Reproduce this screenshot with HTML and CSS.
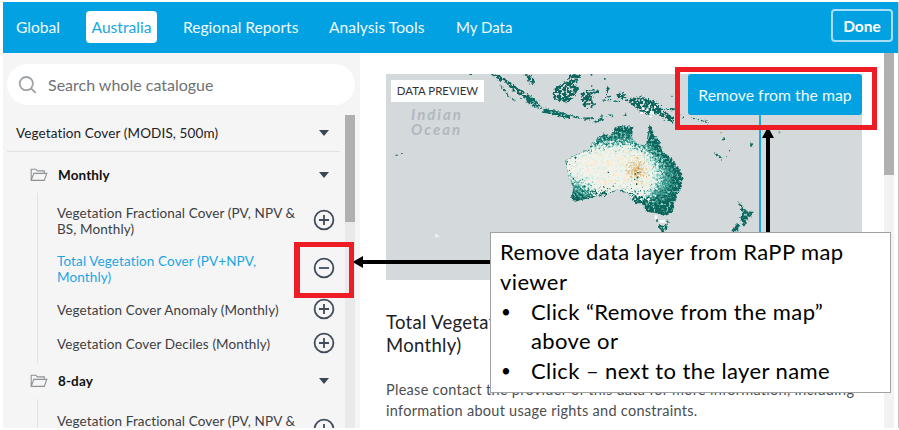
FILE: index.html
```
<!DOCTYPE html>
<html lang="en">
<head>
<meta charset="utf-8">
<title>RaPP Map catalogue</title>
<link rel="stylesheet" href="styles.css">
</head>
<body>
<svg class="defs" width="0" height="0">
  <symbol id="plus" viewBox="0 0 22 22"><circle cx="11" cy="11" r="9.4"/><path d="M11 6v10M6 11h10"/></symbol>
  <symbol id="minus" viewBox="0 0 22 22"><circle cx="11" cy="11" r="9.4"/><path d="M6 11h10"/></symbol>
  <symbol id="folder" viewBox="0 0 18 14"><path d="M1.2 12.2V1.2h4.6l1.5 1.7h7v2M1.2 12.4l2.6-7h13l-2.5 7z"/></symbol>
</svg>
<div class="app">
  <header class="nav">
    <nav class="tabs">
      <a class="tab global">Global</a>
      <a class="tab active">Australia</a>
      <a class="tab reports">Regional Reports</a>
      <a class="tab tools">Analysis Tools</a>
      <a class="tab data">My Data</a>
    </nav>
    <button class="done">Done</button>
  </header>
  <div class="body">
    <aside class="side">
      <div class="search">
        <svg width="20" height="20" viewBox="0 0 20 20"><circle cx="8.3" cy="8.6" r="6.6"/><path d="M13.6 14l3.6 3.4"/></svg>
        <span>Search whole catalogue</span>
      </div>
      <div class="catalogue">
        <div class="tree">
          <div class="root"><span>Vegetation Cover (MODIS, 500m)</span><i class="caret"></i></div>
          <div class="folder"><svg width="18" height="14"><use href="#folder"/></svg><b>Monthly</b><i class="caret"></i></div>
          <div class="group">
            <div class="item two"><span>Vegetation Fractional Cover (PV, NPV &amp;<br>BS, Monthly)</span><svg class="op"><use href="#plus"/></svg></div>
            <div class="item two on"><span>Total Vegetation Cover (PV+NPV,<br>Monthly)</span><svg class="op"><use href="#minus"/></svg></div>
            <div class="item"><span>Vegetation Cover Anomaly (Monthly)</span><svg class="op"><use href="#plus"/></svg></div>
            <div class="item"><span>Vegetation Cover Deciles (Monthly)</span><svg class="op"><use href="#plus"/></svg></div>
          </div>
          <div class="folder second"><svg width="18" height="14"><use href="#folder"/></svg><b>8-day</b><i class="caret"></i></div>
          <div class="group">
            <div class="item two last"><span>Vegetation Fractional Cover (PV, NPV &amp;</span><svg class="op"><use href="#plus"/></svg></div>
          </div>
        </div>
        <div class="track"><div class="thumb"></div></div>
      </div>
    </aside>
    <main class="main">
      <section class="detail">
        <div class="preview">
          <svg class="map" width="476" height="206" viewBox="386 74 476 206">
            <defs>
              <filter id="rough" x="-5%" y="-5%" width="110%" height="110%">
                <feTurbulence type="fractalNoise" baseFrequency=".13" numOctaves="2" seed="4" result="n"/>
                <feDisplacementMap in="SourceGraphic" in2="n" scale="14" xChannelSelector="R" yChannelSelector="G" result="d"/>
                <feColorMatrix in="n" values="0 0 0 0 .25  0 0 0 0 .62  0 0 0 0 .57  0 6 0 0 -3.5" result="l"/>
                <feComposite in="l" in2="d" operator="in" result="s"/>
                <feMerge><feMergeNode in="d"/><feMergeNode in="s"/></feMerge>
              </filter>
              <filter id="holes" x="-5%" y="-10%" width="110%" height="120%">
                <feTurbulence type="fractalNoise" baseFrequency=".13" numOctaves="2" seed="9" result="n"/>
                <feDisplacementMap in="SourceGraphic" in2="n" scale="20" xChannelSelector="R" yChannelSelector="G" result="d"/>
                <feColorMatrix in="n" values="0 0 0 0 0  0 0 0 0 0  0 0 0 0 0  0 0 -12 0 7.4" result="h"/>
                <feComposite in="d" in2="h" operator="in"/>
              </filter>
              <filter id="grain" x="-30%" y="-30%" width="160%" height="160%">
                <feGaussianBlur stdDeviation="5" result="b"/>
                <feTurbulence type="fractalNoise" baseFrequency=".15" numOctaves="2" seed="2" result="n"/>
                <feDisplacementMap in="b" in2="n" scale="95" xChannelSelector="R" yChannelSelector="G"/>
              </filter>
              <filter id="specks" x="0" y="0" width="100%" height="100%">
                <feTurbulence type="fractalNoise" baseFrequency=".1" numOctaves="2" seed="12" result="n"/>
                <feColorMatrix in="n" values="0 0 0 0 .95  0 0 0 0 .82  0 0 0 0 .6  8 0 0 0 -4.6" result="t"/>
                <feGaussianBlur in="SourceGraphic" stdDeviation="6" result="m"/>
                <feComposite in="t" in2="m" operator="in"/>
              </filter>
              <filter id="mint" x="0" y="0" width="100%" height="100%">
                <feTurbulence type="fractalNoise" baseFrequency=".13" numOctaves="2" seed="31" result="n"/>
                <feColorMatrix in="n" values="0 0 0 0 .62  0 0 0 0 .86  0 0 0 0 .82  0 7 0 0 -3.9" result="t"/>
                <feComposite in="t" in2="SourceGraphic" operator="in"/>
              </filter>
              <clipPath id="land"><path d="M106 273L125 262L150 250L180 238L188 216L222 190L240 200L255 172L280 166L310 172L305 203L322 222L348 227L353 195L359 160L372 193L388 213L397 243L420 260L440 285L450 300L458 320L455 350L440 380L428 425L400 437L380 430L350 425L335 400L318 400L305 390L293 367L260 358L225 375L200 378L175 385L135 395L121 385L130 360L117 320Z"/></clipPath>
            </defs>
            <rect x="386" y="74" width="476" height="206" fill="#d4d9dc"/>
            <g class="ocean"><text x="411" y="119.500">Indian</text><text x="411" y="135">Ocean</text></g>
            <g transform="translate(530 70) scale(.3333)">
              <g filter="url(#rough)">
                <path fill="#0f665c" d="M106 273L125 262L150 250L180 238L188 216L222 190L240 200L255 172L280 166L310 172L305 203L322 222L348 227L353 195L359 160L372 193L388 213L397 243L420 260L440 285L450 300L458 320L455 350L440 380L428 425L400 437L380 430L350 425L335 400L318 400L305 390L293 367L260 358L225 375L200 378L175 385L135 395L121 385L130 360L117 320Z"/>
                <path fill="#0f665c" d="M386 462L400 468L413 460L411 480L400 487L388 476Z"/>
              </g>
              <g clip-path="url(#land)">
                <path filter="url(#grain)" fill="#4aa99d" opacity=".7" d="M105 255L220 205L300 195L370 232L420 290L430 340L400 380L370 395L340 385L290 365L240 365L160 380L120 360Z"/>
                <path filter="url(#grain)" fill="#a5ddd5" opacity=".85" d="M98 262L200 218L300 215L360 240L400 300L395 345L350 390L310 370L250 365L180 360L110 335Z"/>
                <path filter="url(#grain)" fill="#f3f2ea" d="M100 268L185 232L300 226L345 245L378 295L375 345L345 385L310 370L250 365L200 375L170 340L105 318Z"/>
                <path filter="url(#mint)" d="M112 268L200 225L300 225L360 245L400 300L395 340L350 380L310 365L250 360L180 360L130 330Z"/>
                <path filter="url(#specks)" d="M140 270L210 240L300 240L350 270L370 320L345 365L300 345L210 362L190 320Z"/>
                <ellipse filter="url(#grain)" cx="320" cy="298" rx="20" ry="26" fill="#dcb772" opacity=".8"/>
                <path fill="#0c5a50" d="M314 310l4 0 0 4-4 0zM320 320l5 0 0 5-5 0zM312 326l4 0 0 4-4 0zM322 306l4 0 0 4-4 0zM233 305l4 0 0 4-4 0zM318 340l4 0 0 5-4 0z"/>
              </g>
              <path fill="#c39a50" d="M322 292h6v6h-6zM314 300h5v5h-5zM328 304h5v5h-5z"/>
              <g filter="url(#holes)" fill="#07655c">
                <path d="M66 60L90 45L110 35L125 12L152 14L138 38L147 55L132 80L110 98L75 88Z"/>
                <path d="M-118 12L-95 16L-72 28L-40 52L-15 68L20 92L38 112L25 116L-5 100L-28 78L-52 62L-72 40L-100 28Z"/>
                <path d="M-22 12L0 14L10 30L15 48L-2 38L-8 26Z"/>
                <path d="M153 70L168 60L205 62L206 70L175 75L192 82L182 88L195 104L186 114L172 97L168 105L172 116L158 108Z"/>
                <path d="M253 70L275 68L290 80L278 88L262 80ZM290 84L345 82L385 98L400 120L440 150L430 160L405 148L380 130L350 134L325 122L310 105L290 95Z"/>
                <path d="M230 48L240 56L230 72L242 88L236 92L226 74ZM408 114L440 114L438 121L412 121Z"/>
              </g>
              <g filter="url(#rough)" fill="none" stroke="#0b6b61" stroke-width="8">
                <path d="M-10 78L20 102M40 122L75 128L118 140" stroke-width="13"/>
                <path d="M122 138L152 144M160 146L192 144M192 158L218 144" stroke-width="6"/>
                <path d="M-90 45L-60 84L-45 90M210 138L228 137M238 135L250 137M280 135l12-3M218 90l14 0M250 93l20 2" stroke-width="4" stroke-dasharray="10 5"/>
                <path d="M445 132L460 144M487 144L535 158" stroke-width="4" stroke-dasharray="8 5"/>
                <path d="M555 249L577 267M586 259l3 0M597 241l4 0M578 203l6 8" stroke-width="5"/>
                <path d="M665 220v10" stroke-width="9"/><path d="M746 187h5" stroke-width="4"/>
                <path d="M378 450l6 0M410 450l4 7" stroke-width="5"/>
              </g>
              <g filter="url(#rough)" fill="#0c6b60">
                <path d="M624 394L636 404L641 415L654 424L668 425L665 435L652 450L647 468L640 465L631 442L637 424ZM620 460L632 464L625 474L630 484H603L612 476Z"/>
              </g>
              <g fill="#f8fbfa"><path d="M335 112h9v8h-9zM330 125h10v7h-10zM349 115h7v8h-7zM360 124h12v9h-12zM358 137h8v5h-8zM335 88h5v5h-5zM372 108h6v6h-6zM374 436h8v12h-8zM388 450h18v8h-18z"/></g>
              <g fill="#1c6e66"><path d="M-404 254h8v3h-8zM-387 249h5v3h-5zM-182 10h8v5h-8zM182 12h5v5h-5zM222 24h5v5h-5zM424 77h4v4h-4zM183 46h4v4h-4z"/></g>
              <path fill="#c79a52" d="M571 186h5v4h-5z"/><path fill="#eef3f2" d="M-284 490l14 10-14 3z"/>
            </g>
          </svg>
          <span class="tag">DATA PREVIEW</span>
          <i class="divider"></i>
          <button class="remove">Remove from the map</button>
        </div>
        <h1>Total Vegetation Cover (PV+NPV,<br>Monthly)</h1>
        <p>Please contact the provider of this data for more information, including<br>information about usage rights and constraints.</p>
      </section>
      <div class="track right"><div class="thumb"></div></div>
    </main>
  </div>
</div>
<svg class="arrows" width="899" height="430" viewBox="0 0 899 430">
  <path d="M362 262H492M768 135V234" fill="none" stroke="#000" stroke-width="4"/>
  <path d="M352.500 262l10.500-6v12zM768 127l-6 11h12z"/>
</svg>
<div class="mark mark-button"></div>
<div class="mark mark-icon"></div>
<div class="callout">
  <p>Remove data layer from RaPP map viewer</p>
  <ul><li>Click “Remove from the map” above or</li><li>Click – next to the layer name</li></ul>
</div>
</body>
</html>
```
FILE: styles.css
```
* { box-sizing: border-box; }
body { margin: 0; width: 899px; height: 430px; overflow: hidden; background: #fff; font-family: Lato, "Liberation Sans", sans-serif; position: relative; }
button { font-family: inherit; margin: 0; padding: 0; }
.defs { position: absolute; }
.app { margin: 2px 0 0 3px; width: 896px; height: 426px; overflow: hidden; display: flex; flex-direction: column; border-right: 1px solid #c3c6c9; }
.nav { height: 51px; flex: none; background: #02a1e2; display: flex; justify-content: space-between; padding: 8px 5px 0 0; }
.tabs { display: flex; }
.tab { height: 32px; line-height: 33px; color: #f1faff; font-size: 15.6px; white-space: nowrap; margin-top: 1px; }
.global { margin-left: 13px; width: 70px; }
.active { width: 71px; text-align: center; background: #fff; color: #1ba6e3; border-radius: 4px; }
.reports { margin-left: 26px; width: 146px; }
.tools { width: 127px; letter-spacing: .05px; }
.data { font-size: 15px; }
.done { width: 62px; height: 33px; border: 2px solid #a6dff6; border-radius: 4px; background: none; color: #fff; font-size: 15.5px; font-weight: 700; margin-top: -1px; }
.body { display: flex; flex: 1; min-height: 0; }
.side { width: 357px; background: #f5f5f5; padding: 11px 5px 0 4px; display: flex; flex-direction: column; }
.search { height: 41px; flex: none; border-radius: 21px; background: #fff; display: flex; align-items: center; padding-left: 11px; gap: 10px; color: #6f7275; font-size: 16px; }
.search svg { fill: none; stroke: #9da2a7; stroke-width: 1.8; stroke-linecap: round; }
.catalogue { display: flex; justify-content: space-between; flex: 1; min-height: 0; margin-top: 10px; }
.tree { width: 333px; overflow: hidden; font-size: 13.5px; line-height: 16px; letter-spacing: .12px; color: #3c4043; }
.root { height: 37px; border-bottom: 1px solid #dfe1e3; display: flex; align-items: center; justify-content: space-between; padding: 0 11px 0 9px; color: #202124; }
.caret { border: 5.5px solid transparent; border-top: 6px solid #3d4654; border-bottom: 0; }
.folder { height: 41px; display: flex; align-items: center; padding: 5px 11px 0 23px; color: #111; }
.folder svg { fill: none; stroke: #8f9295; stroke-width: 1.1; margin-right: 10px; }
.folder b { flex: 1; }
.folder.second { height: 36px; padding-top: 0; }
.group { margin-left: 30px; padding: 4px 5px 2px 19px; border-left: 1px solid #dfe1e3; }
.item { height: 35px; display: flex; align-items: center; justify-content: space-between; white-space: nowrap; }
.item.two { height: 48px; }
.item.last { align-items: flex-start; padding-top: 10px; }
.item.last .op { margin-top: 5px; }
.item.on { color: #1ba6e3; }
.item.on + .item { height: 33px; }
.op { width: 22px; height: 22px; fill: none; stroke: #414b5a; stroke-width: 1.8; flex: none; margin-bottom: 2px; }
.track { width: 10px; background: #e9e9e9; flex: none; }
.thumb { height: 107px; background: #b0b0b0; }
.main { flex: 1; display: flex; justify-content: space-between; min-width: 0; }
.detail { width: 500px; padding: 21px 0 0 26px; }
.preview { width: 476px; height: 206px; position: relative; }
.map { display: block; }
.ocean { font: italic 700 15px Lato, sans-serif; letter-spacing: 2px; fill: #b0b8c0; }
.tag { position: absolute; left: 5px; top: 6px; width: 93px; height: 22px; background: #fff; color: #333; font-size: 11.4px; line-height: 21px; text-align: center; }
.divider { position: absolute; left: 373px; top: 41px; width: 2px; height: 165px; background: #1ba9df; }
.remove { position: absolute; right: 0; top: 0; width: 174px; height: 41px; border: 0; border-radius: 3px; background: #02a1e2; color: #f1faff; font-size: 15.8px; }
h1 { margin: 31px 0 0; font-size: 18.5px; font-weight: 400; line-height: 22.500px; letter-spacing: .3px; color: #202124; }
.detail p { margin: 23px 0 0; font-size: 14.5px; line-height: 21px; letter-spacing: .28px; color: #4b4e51; white-space: nowrap; }
.right { margin-right: 4px; background: #f2f2f2; }
.right .thumb { height: 122px; }
.mark { position: absolute; border: 5px solid #ee1c25; }
.mark-button { left: 675px; top: 67px; width: 202px; height: 63px; }
.mark-icon { left: 294px; top: 242px; width: 60px; height: 56px; border-width: 5px 5px 5px 6px; }
.arrows { position: absolute; left: 0; top: 0; }
.callout { position: absolute; left: 490px; top: 232px; width: 401px; height: 161px; border: 1px solid #a2a2a2; background: #fff; padding: 4px 30px 0 9px; font-size: 22px; line-height: 29.800px; letter-spacing: .4px; color: #000; }
.callout p, .callout ul { margin: 0; }
.callout ul { padding: 0; list-style: none; }
.callout li { padding-left: 31px; position: relative; }
.callout li::before { content: "•"; position: absolute; left: 1px; font-size: 17px; }
```
